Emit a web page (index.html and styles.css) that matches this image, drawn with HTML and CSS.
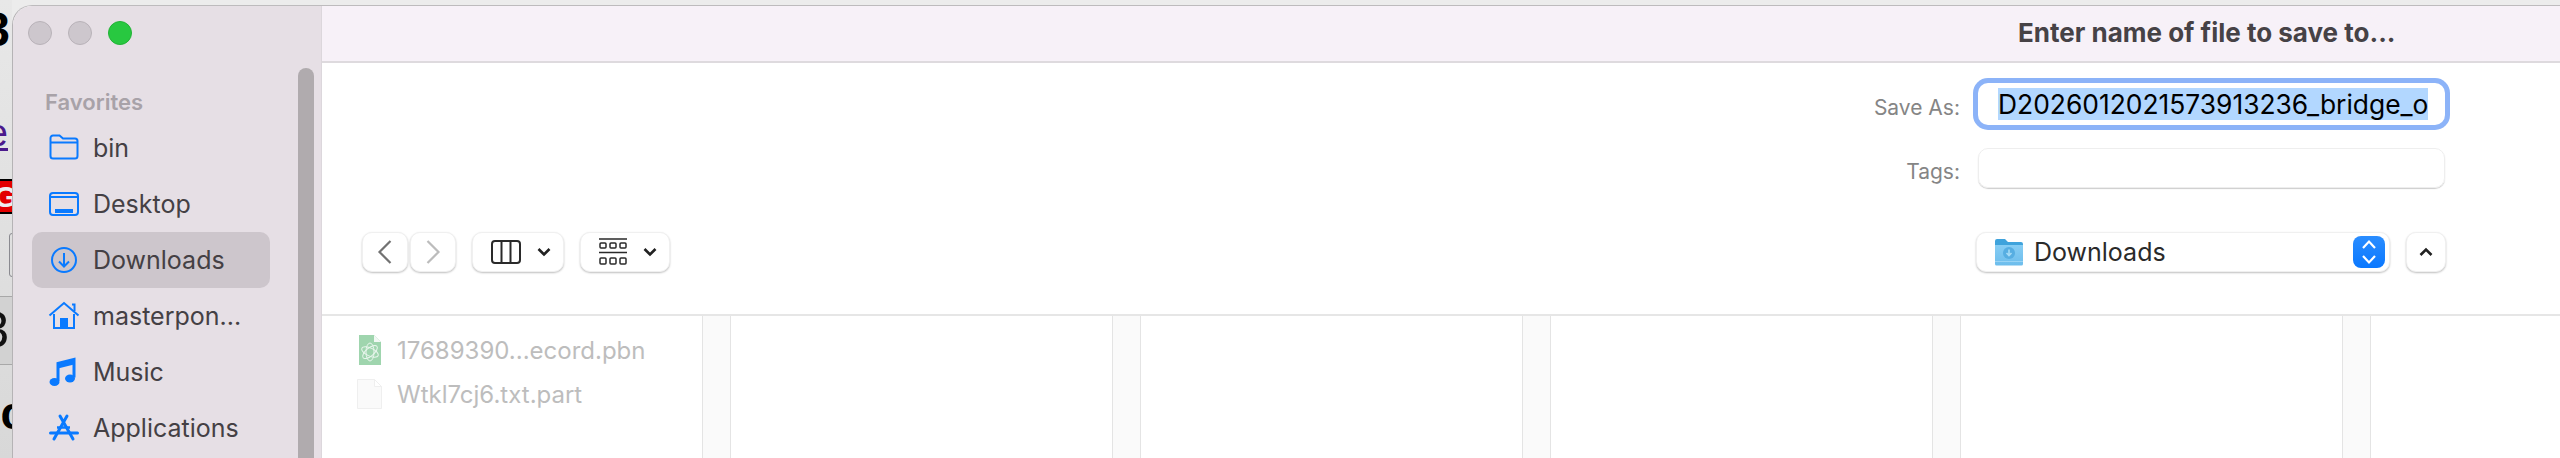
FILE: index.html
```html
<!DOCTYPE html>
<html lang="en">
<head>
    <meta charset="UTF-8">
    <title>Save dialog</title>
    <link rel="stylesheet" href="styles.css">
</head>
<body>

<!-- page behind the dialog -->
<div class="behind">
    <span class="behind-big">3</span>
    <span class="behind-link">e</span>
    <span class="behind-red">Ge</span>
    <span class="behind-field"></span>
    <span class="behind-row"><span class="behind-num">3</span></span>
    <span class="behind-bold">oc</span>
</div>

<div class="window">
    <aside class="sidebar">
        <div class="lights">
            <span class="light"></span>
            <span class="light"></span>
            <span class="light light-green"></span>
        </div>
        <h4 class="side-title">Favorites</h4>
        <ul class="side-list">
            <li class="side-item">
                <svg class="side-icon" viewBox="0 0 32 32"><path d="M2.500 8V6a2.500 2.500 0 0 1 2.500-2.500h6.500l3.500 3h12a2.500 2.500 0 0 1 2.500 2.500v15a2.500 2.500 0 0 1-2.500 2.500H5A2.500 2.500 0 0 1 2.500 24zM2.500 10.500h27" fill="none" stroke="#0a7aff" stroke-width="2"/></svg>
                <span>bin</span>
            </li>
            <li class="side-item">
                <svg class="side-icon" viewBox="0 0 32 32"><rect x="2" y="5" width="28" height="22" rx="3" fill="none" stroke="#0a7aff" stroke-width="2"/><path d="M2 9h28" stroke="#0a7aff" stroke-width="2"/><rect x="7" y="21" width="18" height="4" fill="#0a7aff"/></svg>
                <span>Desktop</span>
            </li>
            <li class="side-item side-item-active">
                <svg class="side-icon" viewBox="0 0 32 32"><circle cx="16" cy="16" r="12" fill="none" stroke="#0a7aff" stroke-width="2"/><path d="M16 9v13M11 17.500l5 5 5-5" fill="none" stroke="#0a7aff" stroke-width="2"/></svg>
                <span>Downloads</span>
            </li>
            <li class="side-item">
                <svg class="side-icon" viewBox="0 0 32 32"><path d="M1.500 15.500 16 3l14.500 12.500" fill="none" stroke="#0a7aff" stroke-width="2"/><path d="M24 4.500h2.500v6.500" fill="none" stroke="#0a7aff" stroke-width="2"/><path d="M6 14v14h7v-9h6v9h7V14" fill="none" stroke="#0a7aff" stroke-width="2"/><rect x="12.500" y="19" width="7" height="10" fill="#0a7aff"/></svg>
                <span>masterpon...</span>
            </li>
            <li class="side-item">
                <svg class="side-icon" viewBox="0 0 32 32"><path d="M10 25V7.500L26 3.500v18" fill="none" stroke="#0a7aff" stroke-width="3"/><path d="M10 7.500 26 3.500v5L10 12.500z" fill="#0a7aff"/><ellipse cx="6.500" cy="26" rx="5" ry="4" fill="#0a7aff"/><ellipse cx="22" cy="22.500" rx="5" ry="4" fill="#0a7aff"/></svg>
                <span>Music</span>
            </li>
            <li class="side-item">
                <svg class="side-icon" viewBox="0 0 32 32"><path d="M12 4l13 23M19 4 6 27" fill="none" stroke="#0a7aff" stroke-width="3" stroke-linecap="round"/><path d="M2.500 21h27" stroke="#0a7aff" stroke-width="3" stroke-linecap="round"/><path d="M9 15.500h13" stroke="#0a7aff" stroke-width="2.500"/></svg>
                <span>Applications</span>
            </li>
        </ul>
        <div class="side-scroll"></div>
    </aside>

    <main class="main">
        <div class="titlebar">Enter name of file to save to...</div>

        <div class="form">
            <div class="form-row form-row-name">
                <label class="form-label">Save As:</label>
                <div class="name-field"><span class="name-selected">D2026012021573913236_bridge_o</span></div>
            </div>
            <div class="form-row form-row-tags">
                <label class="form-label">Tags:</label>
                <div class="tags-field"></div>
            </div>
        </div>

        <div class="toolbar">
            <div class="nav-buttons">
                <span class="tool-btn tool-nav">
                    <svg width="16" height="26" viewBox="0 0 16 26"><path d="M13.500 2 2.500 13l11 11" fill="none" stroke="#727272" stroke-width="2.200"/></svg>
                </span>
                <span class="tool-btn tool-nav">
                    <svg width="16" height="26" viewBox="0 0 16 26"><path d="M2.500 2l11 11-11 11" fill="none" stroke="#bcbcbc" stroke-width="2.200"/></svg>
                </span>
            </div>
            <span class="tool-btn tool-view">
                <svg width="30" height="24" viewBox="0 0 30 24"><rect x="1" y="1" width="28" height="22" rx="3" fill="none" stroke="#2a2a2a" stroke-width="2"/><path d="M10.500 1v22M19.500 1v22" stroke="#2a2a2a" stroke-width="2"/></svg>
                <svg width="14" height="10" viewBox="0 0 14 10"><path d="M1.500 2 7 7.500 12.500 2" fill="none" stroke="#222" stroke-width="2.600"/></svg>
            </span>
            <span class="tool-btn tool-group">
                <svg width="28" height="28" viewBox="0 0 28 28"><path d="M0 1h28M0 14.500h28" stroke="#2a2a2a" stroke-width="1.600"/><g fill="none" stroke="#2a2a2a" stroke-width="1.500"><rect x="1" y="5" width="6" height="5" rx="1"/><rect x="11" y="5" width="6" height="5" rx="1"/><rect x="21" y="5" width="6" height="5" rx="1"/><rect x="1" y="20" width="6" height="6" rx="1"/><rect x="11" y="20" width="6" height="6" rx="1"/><rect x="21" y="20" width="6" height="6" rx="1"/></g></svg>
                <svg width="14" height="10" viewBox="0 0 14 10"><path d="M1.500 2 7 7.500 12.500 2" fill="none" stroke="#222" stroke-width="2.600"/></svg>
            </span>
            <div class="location">
                <svg class="location-folder" width="28" height="28" viewBox="0 0 28 28"><defs><linearGradient id="folderBody" x1="0" y1="0" x2="0" y2="1"><stop offset="0" stop-color="#86cdf4"/><stop offset="1" stop-color="#6dbdec"/></linearGradient></defs><path d="M0 3a2 2 0 0 1 2-2h8l3 3h13a2 2 0 0 1 2 2v6H0z" fill="#3fa3dc"/><path d="M0 7h28v19a1.500 1.500 0 0 1-1.500 1.500h-25A1.500 1.500 0 0 1 0 26z" fill="url(#folderBody)"/><circle cx="14" cy="15" r="6" fill="#57aee2"/><path d="M14 11.500v6M11.500 15l2.500 2.500 2.500-2.500" fill="none" stroke="#a6dbf7" stroke-width="1.600"/><path d="M0 23.500h28" stroke="#99d4f5"/></svg>
                <span class="location-name">Downloads</span>
                <span class="location-stepper">
                    <svg width="16" height="28" viewBox="0 0 16 28"><path d="M2 10 8 3.500 14 10M2 18l6 6.500 6-6.500" fill="none" stroke="#fff" stroke-width="2.200"/></svg>
                </span>
            </div>
            <span class="tool-btn tool-up">
                <svg width="14" height="10" viewBox="0 0 14 10"><path d="M1.500 8 7 2.500 12.500 8" fill="none" stroke="#222" stroke-width="2.600"/></svg>
            </span>
        </div>

        <div class="browser">
            <div class="column column-first">
                <div class="file-row">
                    <svg class="file-icon" width="28" height="30" viewBox="0 0 28 30"><path d="M3 0h15l7 7v23H3z" fill="#9fd5ae"/><path d="M18 0l7 7h-7z" fill="#f2f8f4"/><g fill="none" stroke="#eaf6ee" stroke-width="1"><ellipse cx="14" cy="17" rx="9" ry="4" transform="rotate(25 14 17)"/><ellipse cx="14" cy="17" rx="9" ry="4" transform="rotate(-40 14 17)"/><ellipse cx="14" cy="17" rx="4" ry="9"/></g></svg>
                    <span>17689390...ecord.pbn</span>
                </div>
                <div class="file-row">
                    <svg class="file-icon" width="28" height="30" viewBox="0 0 28 30"><path d="M1.500.500h17l7 7v22h-24z" fill="#fafafa" stroke="#efefef"/><path d="M18.500.500l7 7h-7z" fill="#fff" stroke="#efefef"/></svg>
                    <span>Wtkl7cj6.txt.part</span>
                </div>
            </div>
            <div class="col-handle"></div>
            <div class="column"></div>
            <div class="col-handle"></div>
            <div class="column"></div>
            <div class="col-handle"></div>
            <div class="column"></div>
            <div class="col-handle"></div>
            <div class="column"></div>
            <div class="col-handle"></div>
            <div class="column"></div>
        </div>
    </main>
</div>

</body>
</html>
```

FILE: styles.css
```css
html, body {
    margin: 0;
    padding: 0;
    height: 458px;
    overflow: hidden;
}
body {
    font-family: Inter, "Liberation Sans", sans-serif;
    background-color: #ececec;
    display: flex;
}

/* bits of the page behind */
.behind {
    position: absolute;
    left: 0;
    top: 0;
    width: 12px;
    height: 458px;
    overflow: hidden;
    background: linear-gradient(#e8e8e8, #d8d8d8);
}
.behind span {
    position: absolute;
    white-space: nowrap;
}
.behind-big {
    right: 2px;
    top: 2px;
    font-family: "Liberation Sans", sans-serif;
    font-size: 48px;
    font-weight: bold;
    color: #000;
}
.behind-link {
    right: 4px;
    top: 112px;
    font-family: "Liberation Sans", sans-serif;
    font-size: 38px;
    color: #4b1a8c;
    text-decoration: underline;
}
.behind-red {
    left: -6px;
    top: 179px;
    height: 31px;
    width: 24px;
    line-height: 31px;
    background-color: #e30000;
    border-top: 2px solid #000;
    border-bottom: 2px solid #000;
    font-family: "Liberation Sans", sans-serif;
    font-size: 30px;
    font-weight: bold;
    color: #eee;
}
.behind-field {
    left: 9px;
    top: 233px;
    width: 8px;
    height: 42px;
    border: 1px solid #8a8a90;
    border-radius: 3px;
}
.behind-row {
    left: 0;
    top: 296px;
    width: 12px;
    height: 67px;
    background-color: #d2d2d2;
    border-top: 1px solid #a8a8a8;
    border-bottom: 1px solid #a8a8a8;
}
.behind-num {
    right: 3px;
    top: 4px;
    font-family: "Liberation Sans", sans-serif;
    font-size: 50px;
    color: #111;
}
.behind-bold {
    right: -14px;
    top: 386px;
    font-family: "Liberation Sans", sans-serif;
    font-size: 46px;
    font-weight: bold;
    color: #000;
}

.window {
    position: relative;
    flex: 1;
    display: flex;
    margin: 5px 0 0 12px;
    height: 453px;
    background: white;
    border-top: 1px solid #bdbbbd;
    border-left: 1px solid #b5b3b5;
    border-top-left-radius: 20px;
    overflow: hidden;
}

/* sidebar */
.sidebar {
    position: relative;
    box-sizing: border-box;
    flex: none;
    width: 309px;
    background-color: #e6dfe5;
    border-right: 1px solid #dcd7dc;
    overflow: hidden;
}
.lights {
    display: flex;
    gap: 16px;
    padding: 15px 0 0 15px;
}
.light {
    box-sizing: border-box;
    width: 24px;
    height: 24px;
    border-radius: 50%;
    background-color: #cdc7cd;
    border: 1px solid #b8b2b8;
}
.light-green {
    background-color: #28c840;
    border-color: #22b236;
}
.side-title {
    margin: 44px 0 0 32px;
    font-size: 22px;
    line-height: 26px;
    font-weight: 600;
    color: #a8a2a8;
}
.side-list {
    list-style: none;
    margin: 5px 0 0 19px;
    padding: 0;
    width: 238px;
}
.side-item {
    display: flex;
    align-items: center;
    gap: 13px;
    height: 56px;
    padding-left: 16px;
    font-size: 25px;
    color: #444044;
}
.side-item-active {
    background-color: #cdc6cc;
    border-radius: 10px;
}
.side-icon {
    flex: none;
    width: 32px;
    height: 32px;
}
.side-scroll {
    position: absolute;
    left: 285px;
    top: 62px;
    width: 16px;
    height: 400px;
    border-radius: 8px;
    background-color: #b0abae;
}

/* main part */
.main {
    flex: 1;
    min-width: 0;
    display: flex;
    flex-direction: column;
}
.titlebar {
    box-sizing: border-box;
    height: 57px;
    margin-left: -2px;
    padding-left: 1698px;
    line-height: 54px;
    background-color: #f7f1f8;
    border-bottom: 2px solid #dedade;
    font-size: 26px;
    font-weight: 700;
    color: #464246;
    white-space: nowrap;
}

.form {
    padding: 20px 115px 0 0;
}
.form-row {
    display: flex;
    justify-content: flex-end;
    align-items: center;
    gap: 18px;
}
.form-row-tags {
    margin-top: 23px;
}
.form-label {
    padding-top: 7px;
    font-size: 21px;
    color: #858585;
}
.name-field {
    box-sizing: border-box;
    width: 467px;
    height: 42px;
    padding: 5px 0 0 20px;
    border-radius: 10px;
    background: white;
    box-shadow: 0 0 0 5px #8cb3f8;
    white-space: nowrap;
}
.name-selected {
    display: block;
    width: fit-content;
    height: 32px;
    line-height: 32px;
    background-color: #b2d7ff;
    font-size: 26.400px;
    color: #000;
}
.tags-field {
    box-sizing: border-box;
    width: 467px;
    height: 40px;
    border: 1px solid #eeeeee;
    border-radius: 10px;
    box-shadow: 0 1px 1px rgba(0, 0, 0, 0.2);
}

.toolbar {
    display: flex;
    align-items: center;
    height: 40px;
    margin-top: 44px;
    padding: 0 114px 0 40px;
}
.nav-buttons {
    display: flex;
    gap: 2px;
}
.tool-btn {
    box-sizing: border-box;
    display: flex;
    align-items: center;
    justify-content: center;
    height: 40px;
    background: white;
    border: 1px solid #f0f0f0;
    border-radius: 10px;
    box-shadow: 0 1px 2px rgba(0, 0, 0, 0.25);
}
.tool-nav {
    width: 46px;
}
.tool-view {
    width: 92px;
    gap: 16px;
    margin-left: 16px;
    padding-left: 6px;
}
.tool-group {
    width: 90px;
    gap: 16px;
    margin-left: 16px;
    padding-left: 5px;
}
.location {
    box-sizing: border-box;
    display: flex;
    align-items: center;
    width: 414px;
    height: 40px;
    margin-left: auto;
    padding: 0 4px 0 18px;
    background: white;
    border: 1px solid #f0f0f0;
    border-radius: 10px;
    box-shadow: 0 1px 2px rgba(0, 0, 0, 0.25);
}
.location-name {
    flex: 1;
    margin-left: 11px;
    font-size: 25px;
    color: #2a2a2a;
}
.location-stepper {
    display: flex;
    align-items: center;
    justify-content: center;
    width: 32px;
    height: 32px;
    border-radius: 8px;
    background: linear-gradient(#2a8dff, #0a78ff);
}
.tool-up {
    width: 40px;
    margin-left: 16px;
}

/* file columns */
.browser {
    flex: 1;
    display: flex;
    margin-top: 42px;
    border-top: 2px solid #e6e6e6;
    overflow: hidden;
}
.column {
    flex: none;
    width: 381px;
}
.column-first {
    width: 380px;
    padding-top: 12px;
}
.col-handle {
    box-sizing: border-box;
    flex: none;
    width: 29px;
    background-color: #fafafa;
    border-left: 1px solid #e4e4e4;
    border-right: 1px solid #e4e4e4;
}
.file-row {
    display: flex;
    align-items: center;
    gap: 13px;
    height: 44px;
    padding-left: 34px;
    font-size: 24px;
    color: #bdbdbd;
    white-space: nowrap;
}
.file-icon {
    flex: none;
}
```
